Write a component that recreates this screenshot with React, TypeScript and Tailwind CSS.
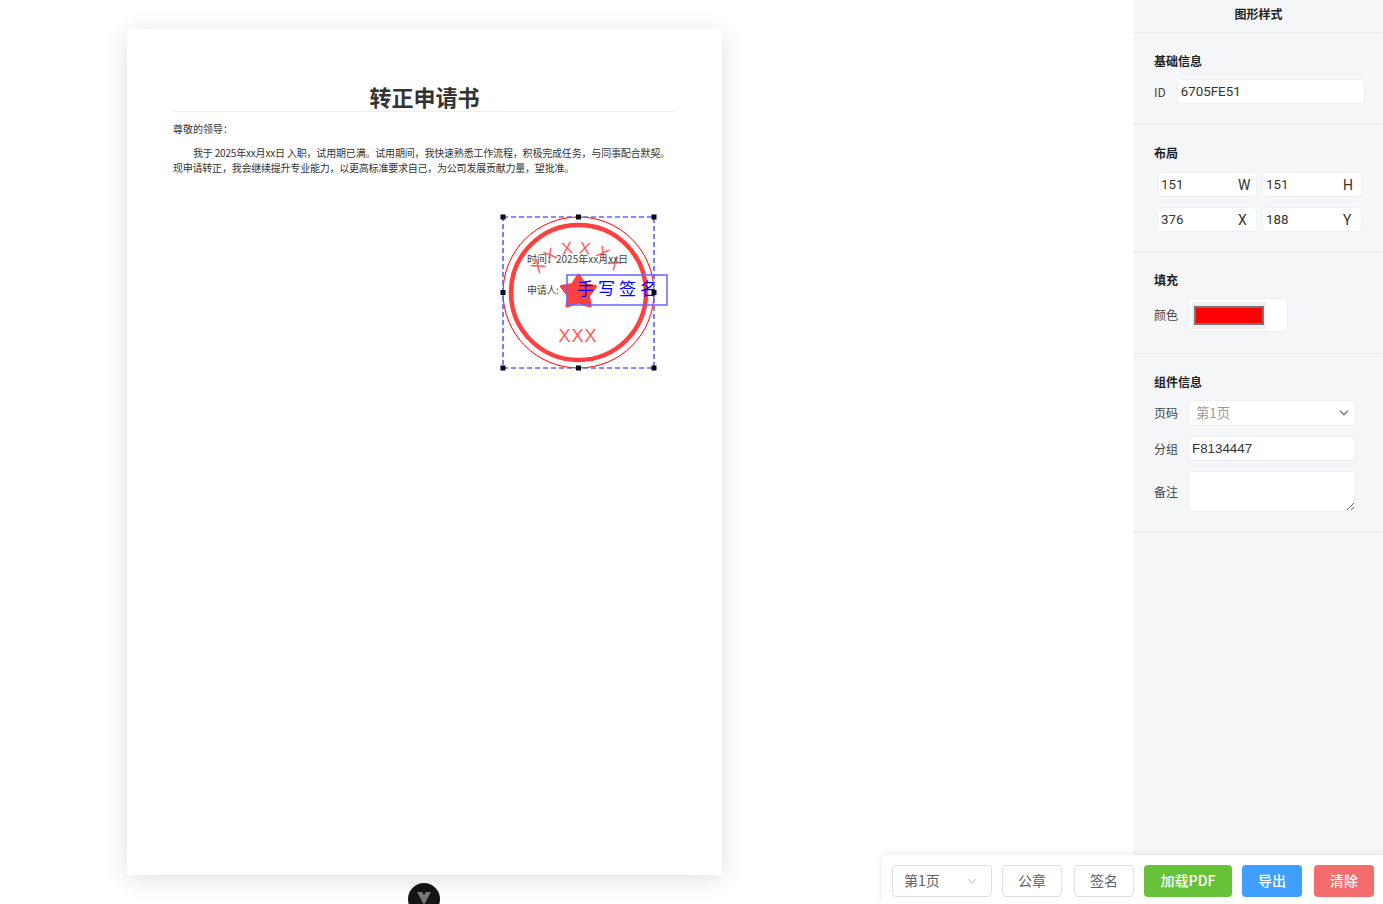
import { ChevronDown } from 'lucide-react';

const cjk = { fontFamily: '"Noto Sans CJK SC", "Liberation Sans", sans-serif' };

const layoutFields = [
  { value: '151', label: 'W' },
  { value: '151', label: 'H' },
  { value: '376', label: 'X' },
  { value: '188', label: 'Y' },
];

const arcLetters = [
  { x: 538, y: 272, r: -50 },
  { x: 550, y: 261, r: -30 },
  { x: 567, y: 254, r: -8 },
  { x: 585, y: 254, r: 8 },
  { x: 603, y: 259, r: 30 },
  { x: 615, y: 269, r: 50 },
];

const handles = [
  [503, 217],
  [578.5, 217],
  [654, 217],
  [503, 292.5],
  [654, 292.5],
  [503, 368],
  [578.5, 368],
  [654, 368],
];

// Stamp, signature and selection box live on the PDF canvas, drawn in page coords
function StampLayer() {
  return (
    <svg className="absolute left-[-127px] top-[-29px] w-[1000px] h-[500px] pointer-events-none" viewBox="0 0 1000 500">
      <circle cx="578.5" cy="292.5" r="75.5" fill="none" stroke="#ff0000" strokeWidth="1" />
      <circle cx="578.5" cy="292.5" r="67.5" fill="none" stroke="#ff4040" strokeWidth="4.5" />
      <path
        d="M578.5 275 L584.5 284.5 L595.5 286.5 L588.5 295.5 L590 306 L578.5 302 L567 306 L568.5 295.5 L561.5 286.5 L572.5 284.5 Z"
        fill="#ff4040"
        stroke="#ff4040"
        strokeWidth="3"
        strokeLinejoin="round"
      />
      {arcLetters.map((l, i) => (
        <text
          key={i}
          x={l.x}
          y={l.y}
          textAnchor="middle"
          fontSize="17"
          fill="#ff5a5a"
          fontFamily="Liberation Sans"
          transform={`rotate(${l.r} ${l.x} ${l.y - 6})`}
        >
          X
        </text>
      ))}
      <text x="578" y="342" textAnchor="middle" fontSize="18" letterSpacing="1" fill="#ff5a5a" fontFamily="Liberation Sans">
        XXX
      </text>
      <text x="527" y="263" fontSize="10" fill="#444" style={cjk}>
        时间：
      </text>
      <text x="556" y="263" fontSize="10" fill="#444" style={cjk}>
        2025年xx月xx日
      </text>
      <text x="527" y="294" fontSize="10" letterSpacing="-0.3" fill="#444" style={cjk}>
        申请人:
      </text>
      <rect x="567" y="275" width="100" height="30" fill="none" stroke="#6666ff" strokeWidth="1.5" />
      <text x="577" y="295" fontSize="17" letterSpacing="4" fill="#0000ff" style={cjk}>
        手写签名
      </text>
      <rect x="503" y="217" width="151" height="151" fill="none" stroke="#6666ff" strokeWidth="1.7" strokeDasharray="5 3" />
      {handles.map(([x, y], i) => (
        <rect key={i} x={x - 2.5} y={y - 2.5} width="5" height="5" fill="#05051f" />
      ))}
    </svg>
  );
}

function SectionTitle({ children }: { children: string }) {
  return <h4 className="text-[12px] leading-[16px] font-bold text-[#222]">{children}</h4>;
}

function FieldLabel({ children }: { children: string }) {
  return <span className="text-[12px] text-[#444] shrink-0">{children}</span>;
}

export default function App() {
  return (
    <div className="relative flex h-[904px] w-[1383px] overflow-hidden bg-white" style={cjk}>
      {/* Canvas */}
      <div className="flex-1 pt-[29px] pl-[127px]">
        <div className="relative h-[846px] w-[595px] bg-white shadow-[0_4px_24px_rgba(0,0,0,0.12)] px-[46px] pt-[52px]">
          <h1 className="h-[31px] border-b border-[#eeeeee] text-center text-[22px] leading-[30px] font-bold text-[#333]">
            转正申请书
          </h1>
          <p className="mt-[10px] text-[10px] leading-[14px] text-[#333]">尊敬的领导：</p>
          <p className="mt-[9px] whitespace-nowrap pl-[20px] text-[10px] leading-[15px] text-[#333] tracking-[-0.18px]">
            我于 2025年xx月xx日 入职，试用期已满。试用期间，我快速熟悉工作流程，积极完成任务，与同事配合默契。
          </p>
          <p className="whitespace-nowrap text-[10px] leading-[15px] text-[#333] tracking-[-0.22px]">
            现申请转正，我会继续提升专业能力，以更高标准要求自己，为公司发展贡献力量，望批准。
          </p>
          <StampLayer />
        </div>
        <div className="absolute left-[408px] top-[883px] flex h-[32px] w-[32px] justify-center rounded-full bg-[#141414] pt-[9px]">
          <svg width="14" height="14" viewBox="0 0 14 14">
            <path d="M0 0 H5 L7 3 L9 0 H14 L7 13 Z" fill="#777" />
          </svg>
        </div>
      </div>

      {/* Style panel */}
      <aside className="w-[249px] shrink-0 bg-[#f5f6f8]">
        <div className="flex h-[33px] items-center justify-center border-b border-[#e9ebee] pb-[4px] text-[12px] font-bold text-[#222]">
          图形样式
        </div>

        <section className="h-[92px] border-b border-[#e9ebee] px-[20px] pt-[20px]">
          <SectionTitle>基础信息</SectionTitle>
          <div className="mt-[10px] flex items-center">
            <FieldLabel>ID</FieldLabel>
            <div className="ml-[11px] flex h-[25px] w-[188px] shrink-0 items-center rounded-[4px] border border-[#eef0f3] bg-white pl-[3px] pt-[1px] font-['Roboto'] text-[13.33px] text-[#333]">
              6705FE51
            </div>
          </div>
        </section>

        <section className="h-[127px] border-b border-[#e9ebee] px-[20px] pt-[20px]">
          <SectionTitle>布局</SectionTitle>
          <div className="ml-[3px] mt-[11px] grid w-[205px] grid-cols-[100px_100px] gap-x-[5px] gap-y-[10px]">
            {layoutFields.map((f) => (
              <div
                key={f.label}
                className="flex h-[25px] items-center justify-between rounded-[4px] border border-[#eef0f3] bg-white pl-[3px] pr-[3px] pt-[1px] font-['Roboto'] text-[13.33px] text-[#333]"
              >
                <span>{f.value}</span>
                <span className="w-[15px] text-[14px]">{f.label}</span>
              </div>
            ))}
          </div>
        </section>

        <section className="h-[102px] border-b border-[#e9ebee] px-[20px] pt-[20px]">
          <SectionTitle>填充</SectionTitle>
          <div className="mt-[10px] flex items-center">
            <FieldLabel>颜色</FieldLabel>
            <div className="ml-[10px] flex h-[34px] w-[100px] rounded-[4px] border border-[#eef0f3] bg-white pl-[3px] pt-[3px]">
              <div className="h-[27px] w-[74px] bg-[#efefef] px-[2px] py-[4px]">
                <div className="h-[19px] w-[70px] border-2 border-[#767676] bg-[#ff0000]" />
              </div>
            </div>
          </div>
        </section>

        <section className="h-[179px] border-b border-[#e9ebee] px-[20px] pt-[20px]">
          <SectionTitle>组件信息</SectionTitle>
          <div className="mt-[10px] flex items-center">
            <FieldLabel>页码</FieldLabel>
            <div className="ml-[10px] flex h-[26px] w-[168px] items-center justify-between rounded-[4px] border border-[#eef0f3] bg-white pb-[1px] pl-[7px] pr-[4px] text-[13.33px] text-[#999]">
              <span>第1页</span>
              <ChevronDown size={14} strokeWidth={3} className="text-[#888]" />
            </div>
          </div>
          <div className="mt-[10px] flex items-center">
            <FieldLabel>分组</FieldLabel>
            <div className="ml-[10px] flex h-[25px] w-[168px] items-center rounded-[4px] border border-[#eef0f3] bg-white pl-[3px] pt-[1px] font-['Liberation_Sans'] text-[13.33px] text-[#333]">
              F8134447
            </div>
          </div>
          <div className="mt-[10px] flex items-center">
            <FieldLabel>备注</FieldLabel>
            <textarea
              readOnly
              className="ml-[10px] h-[41px] w-[168px] rounded-[4px] border border-[#eef0f3] bg-white outline-none"
            />
          </div>
        </section>
      </aside>

      {/* Bottom toolbar */}
      <div className="absolute bottom-0 right-0 flex h-[49px] w-[501px] items-center bg-white pl-[10px] pt-[3px] shadow-[0_0_8px_rgba(0,0,0,0.1)]">
        <div className="flex h-[32px] w-[100px] items-center justify-between rounded-[4px] border border-[#dcdfe6] pb-[1px] pl-[11px] pr-[11px] text-[14px] text-[#606266]">
          <span>第1页</span>
          <ChevronDown size={16} strokeWidth={1.5} className="text-[#c0c4cc]" />
        </div>
        <button className="ml-[10px] h-[32px] w-[60px] rounded-[4px] border border-[#dcdfe6] bg-white pb-[2px] text-[14px] text-[#606266]">公章</button>
        <button className="ml-[12px] h-[32px] w-[60px] rounded-[4px] border border-[#dcdfe6] bg-white pb-[2px] text-[14px] text-[#606266]">签名</button>
        <button className="ml-[10px] h-[32px] w-[88px] rounded-[4px] bg-[#67c23a] pb-[2px] text-[14px] font-medium text-white">加载PDF</button>
        <button className="ml-[10px] h-[32px] w-[60px] rounded-[4px] bg-[#409eff] pb-[2px] text-[14px] font-medium text-white">导出</button>
        <button className="ml-[12px] h-[32px] w-[60px] rounded-[4px] bg-[#f56c6c] pb-[2px] text-[14px] font-medium text-white">清除</button>
      </div>
    </div>
  );
}
